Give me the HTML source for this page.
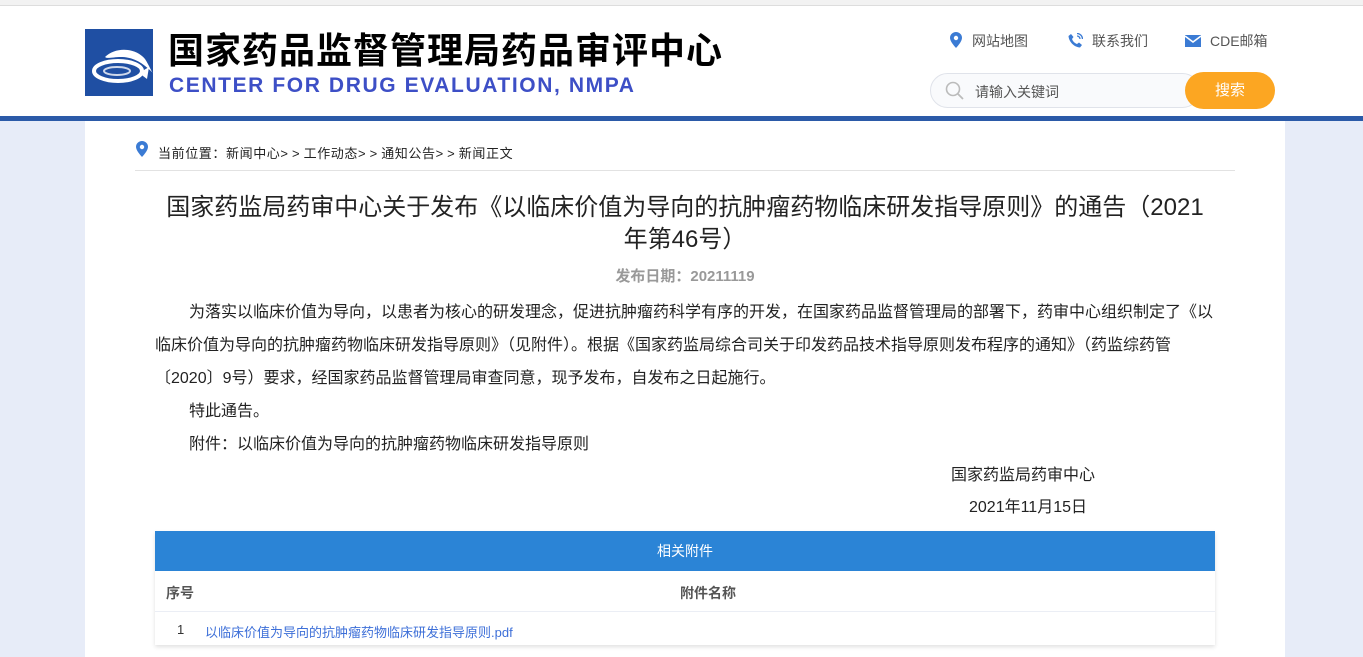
<!DOCTYPE html>
<html><head><meta charset="utf-8"><style>
*{margin:0;padding:0;box-sizing:border-box}
body{width:1363px;height:657px;overflow:hidden;background:#e7ecf8;font-family:"Liberation Sans","Noto Sans CJK SC",sans-serif;color:#222;position:relative}
.hdr{position:absolute;left:0;top:0;width:1363px;height:116px;background:#fff;border-top:5px solid #f2f2f2}
.hdr:before{content:"";position:absolute;left:0;top:0;width:100%;height:1px;background:#ddd}
.bar{position:absolute;left:0;top:116px;width:1363px;height:5px;background:#2b5aa8}
.logo{position:absolute;left:85px;top:29px;width:68px;height:67px;background:#1f4fa3}
.t1{position:absolute;left:168px;top:22px;font-size:36px;font-weight:bold;color:#000;letter-spacing:1px;white-space:nowrap}
.t2{position:absolute;left:169px;top:74px;font-size:21px;font-weight:bold;color:#3d4fc6;letter-spacing:1.6px;white-space:nowrap}
.nav{position:absolute;top:31px;font-size:14px;color:#555;white-space:nowrap}
.srch{position:absolute;left:930px;top:73px;width:270px;height:35px;border:1px solid #e0e3ea;border-radius:18px;background:#f9fafc}
.srch span{position:absolute;left:44px;top:8px;font-size:14px;color:#555}
.btn{position:absolute;left:1185px;top:72px;width:90px;height:37px;border-radius:19px;background:#fca622;color:#fff;font-size:15px;text-align:center;line-height:37px}
.main{position:absolute;left:85px;top:121px;width:1200px;height:536px;background:#fff}
.crumb{position:absolute;left:158px;top:143px;font-size:13px;color:#222;white-space:nowrap;letter-spacing:0.6px}
.crumb i{font-style:normal;letter-spacing:4px}
.hr{position:absolute;left:135px;top:170px;width:1100px;height:1px;background:#e2e2e2}
.title{position:absolute;left:135px;top:192px;width:1100px;text-align:center;font-size:24px;line-height:32px;color:#222;white-space:nowrap}
.date{position:absolute;left:155px;top:265px;width:1060px;text-align:center;font-size:15px;color:#999;font-weight:bold}
.p{position:absolute;left:155px;font-size:16px;letter-spacing:0;line-height:33px;color:#222;white-space:nowrap}
.tbl{position:absolute;left:155px;top:531px;width:1060px;height:114px;background:#fff;box-shadow:0 2px 4px rgba(0,0,0,.12)}
.th{height:40px;background:#2b84d6;color:#fff;text-align:center;line-height:40px;font-size:14px}
.row2{height:41px;border-bottom:1px solid #ebeef5;position:relative;font-size:14px;font-weight:bold;color:#555}
</style></head><body>
<div class="hdr"></div>
<div class="bar"></div>
<div class="logo"><svg width="68" height="67" viewBox="0 0 68 67"><path d="M20 28 C30 18 50 18 60 30 C64 36 66 42 68 44 C60 36 50 28 36 28 C28 28 22 30 20 28Z" fill="#fff"/><ellipse cx="33" cy="42" rx="24" ry="10" fill="none" stroke="#fff" stroke-width="4"/><ellipse cx="32" cy="42" rx="13" ry="4" fill="none" stroke="#cfd8ea" stroke-width="2"/><path d="M54 44 L64 38 L62 50Z" fill="#fff"/></svg></div>
<div class="t1">国家药品监督管理局药品审评中心</div>
<div class="t2">CENTER FOR DRUG EVALUATION, NMPA</div>
<div class="nav" style="left:950px"><svg width="12" height="16" viewBox="0 0 12 16" style="vertical-align:-2px;margin-right:10px"><path d="M6 0C2.7 0 0 2.6 0 5.8 0 10 6 16 6 16s6-6 6-10.2C12 2.6 9.3 0 6 0z" fill="#3b7bd4"/><circle cx="6" cy="6" r="2.2" fill="#fff"/></svg>网站地图</div>
<div class="nav" style="left:1068px"><svg width="15" height="15" viewBox="0 0 15 15" style="vertical-align:-2px;margin-right:9px"><path d="M3 1 L5.5 4 L4 6 C5 8.5 6.5 10 9 11 L11 9.5 L14 12 L12 14.5 C6 14 1 9 0.5 3Z" fill="#3b7bd4"/><path d="M9 3 a3 3 0 0 1 3 3 M9 0.5 a5.5 5.5 0 0 1 5.5 5.5" stroke="#3b7bd4" fill="none" stroke-width="1.3"/></svg>联系我们</div>
<div class="nav" style="left:1185px"><svg width="16" height="12" viewBox="0 0 16 12" style="vertical-align:-1px;margin-right:9px"><rect width="16" height="12" fill="#3b7bd4"/><path d="M0 1 L8 7 L16 1" stroke="#fff" stroke-width="1.5" fill="none"/></svg>CDE邮箱</div>
<div class="srch"><svg width="20" height="20" viewBox="0 0 20 20" style="position:absolute;left:14px;top:7px"><circle cx="8" cy="8" r="6.5" stroke="#bbb" stroke-width="1.6" fill="none"/><path d="M13 13 L18 18" stroke="#bbb" stroke-width="1.8"/></svg><span>请输入关键词</span></div>
<div class="btn">搜索</div>
<div class="main"></div>
<svg width="12" height="16" viewBox="0 0 12 16" style="position:absolute;left:136px;top:141px"><path d="M6 0C2.7 0 0 2.6 0 5.8 0 10 6 16 6 16s6-6 6-10.2C12 2.6 9.3 0 6 0z" fill="#3b7bd4"/><circle cx="6" cy="6" r="2.2" fill="#fff"/></svg>
<div class="crumb">当前位置：新闻中心<i>&gt;&gt;</i>工作动态<i>&gt;&gt;</i>通知公告<i>&gt;&gt;</i>新闻正文</div>
<div class="hr"></div>
<div class="title">国家药监局药审中心关于发布《以临床价值为导向的抗肿瘤药物临床研发指导原则》的通告（2021<br>年第46号）</div>
<div class="date">发布日期：20211119</div>
<div class="p" style="top:296px;left:189px">为落实以临床价值为导向，以患者为核心的研发理念，促进抗肿瘤药科学有序的开发，在国家药品监督管理局的部署下，药审中心组织制定了《以</div>
<div class="p" style="top:329px">临床价值为导向的抗肿瘤药物临床研发指导原则》（见附件）。根据《国家药监局综合司关于印发药品技术指导原则发布程序的通知》（药监综药管</div>
<div class="p" style="top:362px">〔2020〕9号）要求，经国家药品监督管理局审查同意，现予发布，自发布之日起施行。</div>
<div class="p" style="top:395px;left:189px">特此通告。</div>
<div class="p" style="top:428px;left:189px">附件：以临床价值为导向的抗肿瘤药物临床研发指导原则</div>
<div class="p" style="top:459px;left:951px">国家药监局药审中心</div>
<div class="p" style="top:491px;left:969px">2021年11月15日</div>
<div class="tbl">
<div class="th">相关附件</div>
<div class="row2"><span style="position:absolute;left:11px;top:12px">序号</span><span style="position:absolute;left:525px;top:12px">附件名称</span></div>
<div style="position:relative;height:33px;font-size:13px"><span style="position:absolute;left:22px;top:10px;color:#333">1</span><span style="position:absolute;left:50px;top:10px;color:#3d6fd8">以临床价值为导向的抗肿瘤药物临床研发指导原则.pdf</span></div>
</div>
</body></html>
